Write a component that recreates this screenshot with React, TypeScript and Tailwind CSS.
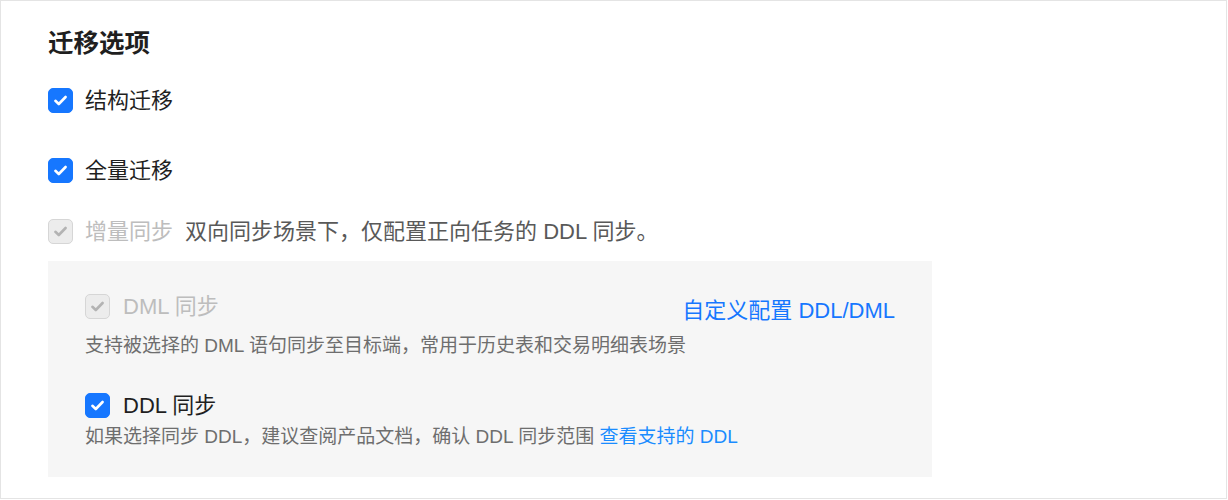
const FONT = { fontFamily: '"Liberation Sans", "Noto Sans CJK SC", sans-serif' };

function Box({ disabled = false }: { disabled?: boolean }) {
  return (
    <span
      className={`flex h-[25px] w-[25px] shrink-0 items-center justify-center rounded-[5px] border ${
        disabled ? "border-[#d6d6d6] bg-[#ececec]" : "border-[#1677ff] bg-[#1677ff]"
      }`}
    >
      <svg width="17" height="17" viewBox="0 0 17 17" fill="none">
        <path
          d="M3.4 8.8l3.4 3.2 6.8-7"
          stroke={disabled ? "#b3b3b3" : "#ffffff"}
          strokeWidth="2.6"
          strokeLinecap="round"
          strokeLinejoin="round"
        />
      </svg>
    </span>
  );
}

export default function App() {
  return (
    <div style={FONT} className="h-[499px] w-[1227px] border border-[#e4e4e4] bg-white pl-[47px] pt-[24px]">
      <h2 className="h-[36px] text-[25.5px] font-semibold leading-[36px] text-[#1f1f1f]">迁移选项</h2>

      <div className="mt-[21px] flex h-[36px] items-center gap-[12px]">
        <Box />
        <span className="text-[22px] text-[#1f1f1f]">结构迁移</span>
      </div>

      <div className="mt-[34px] flex h-[36px] items-center gap-[12px]">
        <Box />
        <span className="text-[22px] text-[#1f1f1f]">全量迁移</span>
      </div>

      <div className="mt-[25px] flex h-[36px] items-center gap-[12px]">
        <Box disabled />
        <span className="text-[22px] text-[#bdbdbd]">增量同步</span>
        <span className="text-[22px] text-[#595959]">双向同步场景下，仅配置正向任务的 DDL 同步。</span>
      </div>

      <div className="mt-[12px] h-[216px] w-[884px] bg-[#f6f6f6] pl-[37px] pr-[37px] pt-[30px]">
        <div className="flex h-[30px] items-center justify-between">
          <div className="flex items-center gap-[13px]">
            <Box disabled />
            <span className="text-[22px] text-[#bdbdbd]">DML 同步</span>
          </div>
          <span className="pt-[8px] text-[22px] text-[#1677ff]">自定义配置 DDL/DML</span>
        </div>
        <p className="mt-[10px] h-[30px] text-[19px] leading-[30px] text-[#6e6e6e]">
          支持被选择的 DML 语句同步至目标端，常用于历史表和交易明细表场景
        </p>

        <div className="mt-[29px] flex h-[30px] items-center gap-[13px]">
          <Box />
          <span className="text-[22px] text-[#1f1f1f]">DDL 同步</span>
        </div>
        <p className="mt-[2px] h-[30px] text-[19px] leading-[30px] text-[#6e6e6e]">
          如果选择同步 DDL，建议查阅产品文档，确认 DDL 同步范围 <span className="text-[#1a8cff]">查看支持的 DDL</span>
        </p>
      </div>
    </div>
  );
}
